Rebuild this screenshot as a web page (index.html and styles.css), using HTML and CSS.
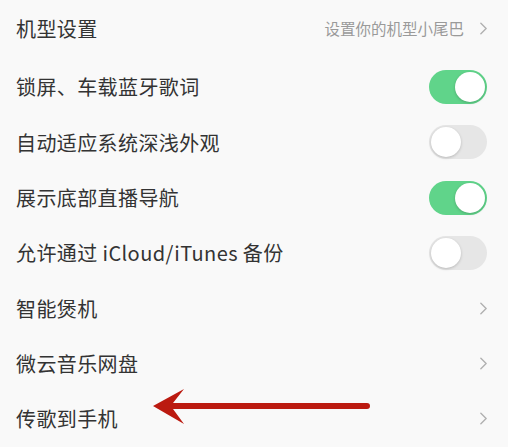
FILE: index.html
```html
<!DOCTYPE html>
<html lang="zh">
<head>
<meta charset="utf-8">
<link rel="stylesheet" href="styles.css">
</head>
<body>
<div class="list">
  <div class="row first">
    <span class="label">机型设置</span>
    <span class="right"><span class="hint">设置你的机型小尾巴</span><svg class="chev" viewBox="0 0 8 14"><path d="M1 1 L7 7 L1 13" fill="none" stroke="#b0b0b0" stroke-width="1.6" stroke-linecap="round" stroke-linejoin="round"/></svg></span>
  </div>
  <div class="row">
    <span class="label">锁屏、车载蓝牙歌词</span>
    <span class="toggle on"><span class="knob"></span></span>
  </div>
  <div class="row">
    <span class="label">自动适应系统深浅外观</span>
    <span class="toggle"><span class="knob"></span></span>
  </div>
  <div class="row">
    <span class="label">展示底部直播导航</span>
    <span class="toggle on"><span class="knob"></span></span>
  </div>
  <div class="row">
    <span class="label">允许通过 iCloud/iTunes 备份</span>
    <span class="toggle"><span class="knob"></span></span>
  </div>
  <div class="row">
    <span class="label">智能煲机</span>
    <span class="right"><svg class="chev" viewBox="0 0 8 14"><path d="M1 1 L7 7 L1 13" fill="none" stroke="#b0b0b0" stroke-width="1.6" stroke-linecap="round" stroke-linejoin="round"/></svg></span>
  </div>
  <div class="row">
    <span class="label">微云音乐网盘</span>
    <span class="right"><svg class="chev" viewBox="0 0 8 14"><path d="M1 1 L7 7 L1 13" fill="none" stroke="#b0b0b0" stroke-width="1.6" stroke-linecap="round" stroke-linejoin="round"/></svg></span>
  </div>
  <div class="row">
    <span class="label">传歌到手机</span>
    <span class="right"><svg class="chev" viewBox="0 0 8 14"><path d="M1 1 L7 7 L1 13" fill="none" stroke="#b0b0b0" stroke-width="1.6" stroke-linecap="round" stroke-linejoin="round"/></svg></span>
  </div>
</div>
<svg class="arrow" viewBox="0 0 230 40" width="230" height="40">
  <path d="M0 17 L31 0 L20 14 L214 14 A3 3 0 0 1 214 20 L20 20 L31 35 Z" fill="#bb1a10"/>
</svg>
</body>
</html>
```
FILE: styles.css
```css
html, body {
  margin: 0;
  padding: 0;
  background: #f9f9f9;
}
body {
  width: 508px;
  height: 447px;
  overflow: hidden;
  position: relative;
  font-family: "Noto Sans CJK SC", "Noto Sans", sans-serif;
}
.list {
  display: flex;
  flex-direction: column;
}
.row {
  height: 55.3px;
  display: flex;
  align-items: center;
  justify-content: space-between;
  padding: 0 20px 0 16px;
  box-sizing: border-box;
}
.row.first {
  height: 59.3px;
  padding-bottom: 3px;
}
.label {
  font-size: 20px;
  color: #333;
  letter-spacing: 0.4px;
}
.right {
  display: flex;
  align-items: center;
}
.hint {
  font-size: 15.5px;
  color: #9a9a9a;
  margin-right: 16px;
}
.chev {
  width: 7px;
  height: 13px;
  margin-right: 1px;
}
.toggle {
  width: 58px;
  height: 34px;
  border-radius: 17px;
  background: #e6e6e6;
  position: relative;
  margin-right: 1px;
}
.toggle.on {
  background: #60d48a;
}
.knob {
  position: absolute;
  top: 2px;
  left: 2px;
  width: 30px;
  height: 30px;
  border-radius: 50%;
  background: #fff;
  box-shadow: 0 1px 3px rgba(0,0,0,0.2);
}
.toggle.on .knob {
  left: 26px;
}
.arrow {
  position: absolute;
  left: 153px;
  top: 389px;
}
```
